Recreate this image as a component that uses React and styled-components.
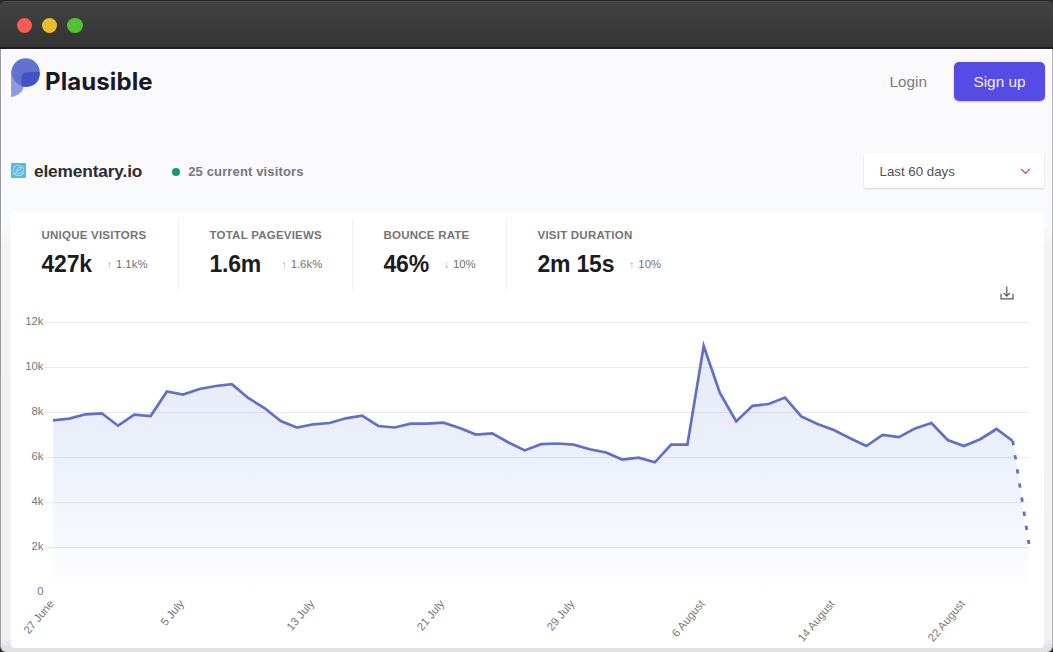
import React from "react";
import styled, { createGlobalStyle } from "styled-components";

const GlobalStyle = createGlobalStyle`
  * { box-sizing: border-box; }
  body { margin: 0; background: #2a2a2a; font-family: "Liberation Sans", Arial, sans-serif; }
`;

const Window = styled.div`
  display: flex;
  flex-direction: column;
  width: 1053px;
  height: 652px;
  overflow: hidden;
`;

const TitleBar = styled.header`
  display: flex;
  align-items: center;
  gap: 10px;
  flex: none;
  height: 49px;
  padding: 3px 16.5px 0;
  border-top: 1px solid #202020;
  border-bottom: 2px solid #1e1e1e;
  border-radius: 6px 6px 0 0;
  background: linear-gradient(#424242, #343434);
  box-shadow: inset 0 1px 0 #505050;
`;

const Light = styled.span`
  width: 15.4px;
  height: 15.4px;
  border-radius: 50%;
  background: ${(p) => p.$color};
`;

const Page = styled.main`
  display: flex;
  flex-direction: column;
  flex: 1;
  min-height: 0;
  padding: 0 8px 4px 10px;
  background: linear-gradient(#fafafe 0, #fafafd 140px, #f8f9fc 160px, #f9fafc 175px, #f3f3f5 198px, #f1f1f3 590px, #e1e1e3 598px);
  border-left: 1px solid #9b9b9d;
  border-right: 1px solid #b6b6b9;
  border-radius: 0 0 6px 6px;
`;

const Nav = styled.nav`
  display: flex;
  align-items: center;
  justify-content: space-between;
  flex: none;
  height: 65px;
  margin-right: -1px;
`;

const Brand = styled.div`
  display: flex;
  align-items: center;
  gap: 5px;
  padding-bottom: 7px;
`;

const Wordmark = styled.span`
  padding-top: 7px;
  font: 700 24px/30px Inter, sans-serif;
  letter-spacing: 0.1px;
  color: #181827;
`;

const Actions = styled.div`
  display: flex;
  align-items: center;
  gap: 27px;
`;

const LoginLink = styled.span`
  font-size: 15.3px;
  color: #7b7b80;
`;

const SignUp = styled.button`
  width: 91px;
  height: 39px;
  padding: 0;
  border: 0;
  border-radius: 5px;
  background: #574be6;
  box-shadow: 0 1px 2px rgba(50, 45, 130, 0.25);
  color: #f2f1ff;
  font: 15.4px "Liberation Sans", Arial, sans-serif;
`;

const SiteRow = styled.section`
  display: flex;
  align-items: center;
  flex: none;
  height: 37px;
  margin-top: 38px;
`;

const SiteName = styled.h1`
  margin: 0 30px 0 8px;
  padding-top: 1px;
  font-size: 17.3px;
  line-height: 22px;
  letter-spacing: -0.15px;
  color: #2d2d31;
`;

const LiveDot = styled.span`
  width: 8px;
  height: 8px;
  margin: 2px 8px 0 0;
  border-radius: 50%;
  background: #16996f;
`;

const Visitors = styled.span`
  padding-top: 1px;
  font-size: 13px;
  font-weight: 700;
  letter-spacing: 0.14px;
  color: #77777f;
`;

const PeriodPicker = styled.div`
  display: flex;
  align-items: center;
  justify-content: space-between;
  width: 180px;
  height: 35px;
  margin-left: auto;
  padding: 1px 13px 0 15.5px;
  border-radius: 2px;
  background: #fff;
  box-shadow: 0 1px 2px rgba(0, 0, 0, 0.16);
  font-size: 13.3px;
  color: #515156;
`;

const Card = styled.section`
  display: flex;
  flex-direction: column;
  flex: 1;
  min-height: 0;
  margin-top: 22px;
  background: #fff;
  border-radius: 4px;
`;

const Stats = styled.div`
  display: flex;
  flex: none;
  height: 73px;
  margin-top: 8px;
`;

const Stat = styled.div`
  width: ${(p) => p.$width}px;
  padding: 9px 0 0 30.5px;
  border-right: ${(p) => (p.$last ? "0" : "1px solid #f0f0f1")};
`;

const StatLabel = styled.div`
  font-size: 11.5px;
  font-weight: 700;
  line-height: 14px;
  letter-spacing: 0.23px;
  text-transform: uppercase;
  white-space: nowrap;
  color: #747478;
`;

const StatLine = styled.div`
  display: flex;
  align-items: center;
  gap: ${(p) => p.$gap}px;
  margin-top: 8px;
  white-space: nowrap;
`;

const StatValue = styled.span`
  padding-top: 1px;
  font-size: 23px;
  font-weight: 700;
  line-height: 27px;
  letter-spacing: -0.2px;
  color: #1c1c1f;
`;

const Change = styled.span`
  display: flex;
  gap: 3px;
  font-size: 11.4px;
  color: #727276;
`;

const Arrow = styled.span`
  width: 6px;
  font-size: 10px;
  line-height: 13px;
  color: #929296;
`;

const Chart = styled.svg`
  display: block;
  flex: none;
  width: 1033px;
  height: 356px;
  overflow: visible;
`;

const AxisText = styled.text`
  font-family: "Liberation Sans", Arial, sans-serif;
  font-size: 11.3px;
  fill: #77777a;
  text-anchor: end;
`;

const stats = [
  { label: "Unique visitors", value: "427k", arrow: "↑", change: "1.1k%", width: 168, gap: 15 },
  { label: "Total pageviews", value: "1.6m", arrow: "↑", change: "1.6k%", width: 174, gap: 20.5 },
  { label: "Bounce rate", value: "46%", arrow: "↓", change: "10%", width: 154, gap: 15 },
  { label: "Visit duration", value: "2m 15s", arrow: "↑", change: "10%", width: 200, gap: 15 },
];

const levels = [
  420.3, 418.6, 414.3, 413.3, 425.7, 414.7, 416, 391.5, 394.6, 389, 386, 384.2, 398, 408, 421, 427.6,
  424.3, 423, 418.3, 415.7, 426, 427.5, 423.6, 423.6, 422.6, 428, 434.6, 433.3, 442.5, 450.4, 444.2,
  443.5, 444.7, 449.3, 452.5, 459.5, 457.6, 462.3, 444.7, 444.7, 346, 393, 421.4, 405.8, 404, 397.5,
  416.5, 424, 430, 438.3, 446, 435, 437.2, 428.4, 423, 440, 446, 439.2, 429, 441, 544,
];

const STEP = 976 / 60;
const points = levels.map((y, i) => `${(53 + i * STEP).toFixed(1)},${y}`);
const ticks = ["12k", "10k", "8k", "6k", "4k", "2k", "0"];
const dates = ["27 June", "5 July", "13 July", "21 July", "29 July", "6 August", "14 August", "22 August"];

function Logo() {
  return (
    <svg width="29" height="40" viewBox="0 0 29 40">
      <path d="M0 13h13v13q0 8-7 11-3 2-6 2z" fill="#a5afe2" />
      <circle cx="14.6" cy="14.5" r="14.2" fill="#6372d0" />
      <path d="M0.400 15q1.600 10 10 13l2 .5q-2 7-8 9l-4 1.500z" fill="#909bdb" />
      <path d="M10.500 28V20q0-6 6-6h12q1 8-5 12.500-6 4-13 1.500z" fill="#4353c4" />
    </svg>
  );
}

function SiteIcon() {
  return (
    <svg width="15" height="15" viewBox="0 0 15 15">
      <rect width="15" height="15" rx="1" fill="#5db7e2" />
      <circle cx="7.5" cy="7.5" r="5.3" fill="none" stroke="#a2d9f2" strokeWidth="1.1" />
      <path d="M4.5 8.5q6-1 5.500-4-2.500-1-4 2t1 4.500q2 0 4.500-3M2.500 11.500l3-2.500" fill="none" stroke="#c0e6f7" strokeWidth=".9" />
    </svg>
  );
}

function VisitorsChart() {
  return (
    <Chart viewBox="11 292 1033 356">
      <defs>
        <linearGradient id="area" x1="0" y1="345" x2="0" y2="592" gradientUnits="userSpaceOnUse">
          <stop offset="0" stopColor="#6574cd" stopOpacity=".16" />
          <stop offset=".5" stopColor="#6584dd" stopOpacity=".11" />
          <stop offset="1" stopColor="#6574cd" stopOpacity="0" />
        </linearGradient>
      </defs>
      {ticks.map((label, i) => (
        <g key={label}>
          {i < 6 && <path d={`M44 ${322.4 + i * 45.04}H1029`} stroke="#e9e9eb" />}
          <AxisText x="43.5" y={325.2 + i * 45.04}>{label}</AxisText>
        </g>
      ))}
      <polygon points={`53,592 ${points.join(" ")} 1029,592`} fill="url(#area)" />
      <polyline points={points.slice(0, 60).join(" ")} fill="none" stroke="#6070c6" strokeWidth="2.7" strokeMiterlimit="10" />
      <path d="M1012.8 441L1029 544" stroke="#6070c6" strokeWidth="2.8" strokeDasharray="4.3 10" />
      {dates.map((label, i) => (
        <AxisText key={label} transform={`translate(${54.5 + i * STEP * 8} 604) rotate(-50)`}>{label}</AxisText>
      ))}
      <g fill="none" stroke="#55555a" strokeWidth="1.2">
        <path d="M1006.8 286.500v9.500M1003.600 292.800l3.200 3.300 3.200-3.300" />
        <path d="M1001 293.800v5h12v-5" />
      </g>
    </Chart>
  );
}

export default function App() {
  return (
    <Window>
      <GlobalStyle />
      <TitleBar>
        <Light $color="#fc5b54" />
        <Light $color="#e7bd2d" />
        <Light $color="#52c22e" />
      </TitleBar>
      <Page>
        <Nav>
          <Brand><Logo /><Wordmark>Plausible</Wordmark></Brand>
          <Actions><LoginLink>Login</LoginLink><SignUp>Sign up</SignUp></Actions>
        </Nav>
        <SiteRow>
          <SiteIcon />
          <SiteName>elementary.io</SiteName>
          <LiveDot />
          <Visitors>25 current visitors</Visitors>
          <PeriodPicker>
            Last 60 days
            <svg width="11" height="7" viewBox="0 0 11 7">
              <path d="M1.2 1l4.300 4.300L9.800 1" fill="none" stroke="#cf5270" strokeWidth="1.3" />
            </svg>
          </PeriodPicker>
        </SiteRow>
        <Card>
          <Stats>
            {stats.map((s, i) => (
              <Stat key={s.label} $width={s.width} $last={i === 3}>
                <StatLabel>{s.label}</StatLabel>
                <StatLine $gap={s.gap}>
                  <StatValue>{s.value}</StatValue>
                  <Change><Arrow>{s.arrow}</Arrow>{s.change}</Change>
                </StatLine>
              </Stat>
            ))}
          </Stats>
          <VisitorsChart />
        </Card>
      </Page>
    </Window>
  );
}
